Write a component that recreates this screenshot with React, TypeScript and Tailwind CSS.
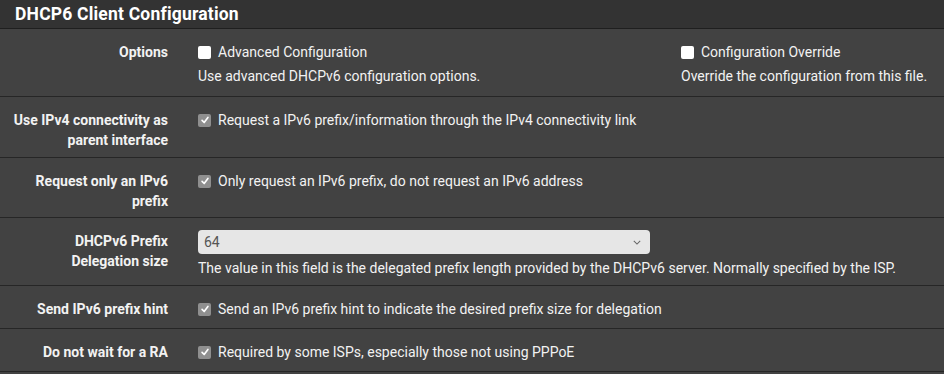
import type { ReactNode } from 'react'

function Box({ checked }: { checked?: boolean }) {
  if (!checked) {
    return <span className="inline-block w-[13px] h-[13px] rounded-[2px] bg-white shrink-0" />
  }
  return (
    <span className="inline-flex items-center justify-center w-[13px] h-[13px] rounded-[2px] bg-[#8f8f8f] shrink-0">
      <svg viewBox="0 0 12 12" className="w-[10px] h-[10px]" fill="none" stroke="white" strokeWidth="2" strokeLinecap="round" strokeLinejoin="round">
        <path d="M2.5 6.5 L5 9 L9.5 3" />
      </svg>
    </span>
  )
}

function Check({ checked, children }: { checked?: boolean; children: ReactNode }) {
  return (
    <div className="flex items-center gap-[7px] h-[20px]">
      <Box checked={checked} />
      <span>{children}</span>
    </div>
  )
}

function Row({ label, pad, children }: { label: ReactNode; pad: string; children: ReactNode }) {
  return (
    <div className={`flex border-b border-[#262626] ${pad}`}>
      <div className="w-[183px] shrink-0 pl-[4px] pr-[15px] text-right font-bold leading-[20px] whitespace-nowrap">{label}</div>
      <div className="flex-1 px-[15px] leading-[20px]">{children}</div>
    </div>
  )
}

export default function App() {
  return (
    <div className="w-[944px] h-[374px] bg-[#424242] text-[#f2f2f2] text-[14px] font-['Roboto',sans-serif] overflow-hidden">
      {/* Panel heading */}
      <div className="h-[29px] bg-[#333333] border-b border-[#1f1f1f] px-[15px] flex items-center">
        <h2 className="text-[17.5px] font-bold text-white tracking-[0.2px]">DHCP6 Client Configuration</h2>
      </div>

      <Row label="Options" pad="pt-[13px] pb-[10px] h-[68px]">
        <div className="flex">
          <div className="w-[483px]">
            <Check>Advanced Configuration</Check>
            <p className="mt-[4px]">Use advanced DHCPv6 configuration options.</p>
          </div>
          <div>
            <Check>Configuration Override</Check>
            <p className="mt-[4px]">Override the configuration from this file.</p>
          </div>
        </div>
      </Row>

      <Row label={<>Use IPv4 connectivity as<br />parent interface</>} pad="pt-[13px] h-[61px]">
        <Check checked>Request a IPv6 prefix/information through the IPv4 connectivity link</Check>
      </Row>

      <Row label={<>Request only an IPv6<br />prefix</>} pad="pt-[13px] h-[60px]">
        <Check checked>Only request an IPv6 prefix, do not request an IPv6 address</Check>
      </Row>

      <Row label={<>DHCPv6 Prefix<br />Delegation size</>} pad="pt-[13px] h-[68px]">
        <div className="w-[452px] h-[24px] -mt-[1px] rounded-[4px] bg-[#e6e6e6] text-[#555] flex items-center justify-between pl-[6px] pr-[9px]">
          <span>64</span>
          <svg viewBox="0 0 10 6" className="w-[8px] h-[5px]" fill="none" stroke="#666" strokeWidth="1.3">
            <path d="M1 1 L5 5 L9 1" />
          </svg>
        </div>
        <p className="mt-[4px]">The value in this field is the delegated prefix length provided by the DHCPv6 server. Normally specified by the ISP.</p>
      </Row>

      <Row label="Send IPv6 prefix hint" pad="pt-[13px] h-[43px]">
        <Check checked>Send an IPv6 prefix hint to indicate the desired prefix size for delegation</Check>
      </Row>

      <Row label="Do not wait for a RA" pad="pt-[13px] h-[43px]">
        <Check checked>Required by some ISPs, especially those not using PPPoE</Check>
      </Row>
    </div>
  )
}
